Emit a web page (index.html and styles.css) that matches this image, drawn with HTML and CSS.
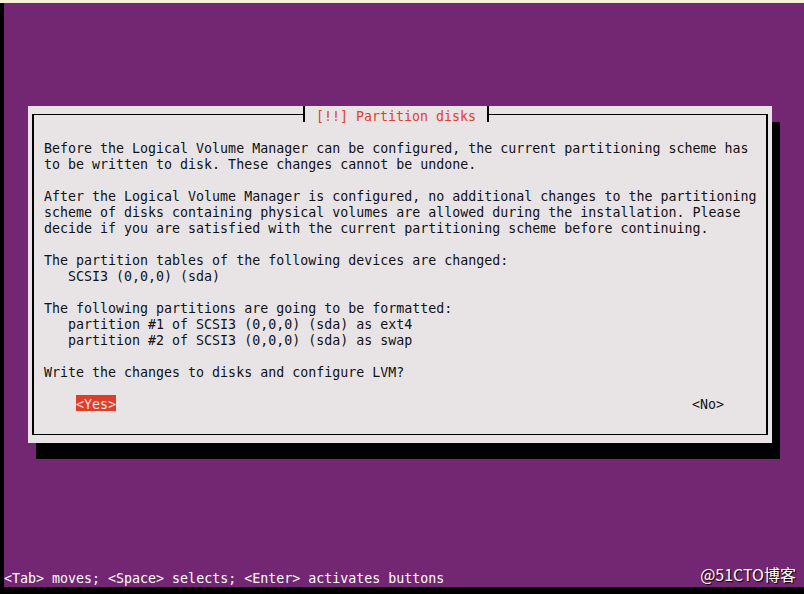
FILE: index.html
```html
<!DOCTYPE html>
<html lang="en">
<head>
  <meta charset="UTF-8" />
  <title>Partition disks</title>
  <link rel="stylesheet" href="styles.css">
</head>
<body>

  <div class="topline"></div>

  <div class="screen">
    <div class="dialog">
      <div class="title">[!!] Partition disks</div>
      <div class="frame">
<pre class="message">Before the Logical Volume Manager can be configured, the current partitioning scheme has
to be written to disk. These changes cannot be undone.

After the Logical Volume Manager is configured, no additional changes to the partitioning
scheme of disks containing physical volumes are allowed during the installation. Please
decide if you are satisfied with the current partitioning scheme before continuing.

The partition tables of the following devices are changed:
   SCSI3 (0,0,0) (sda)

The following partitions are going to be formatted:
   partition #1 of SCSI3 (0,0,0) (sda) as ext4
   partition #2 of SCSI3 (0,0,0) (sda) as swap

Write the changes to disks and configure LVM?</pre>
        <div class="buttons">
          <span class="btn selected">&lt;Yes&gt;</span>
          <span class="btn">&lt;No&gt;</span>
        </div>
      </div>
    </div>

    <div class="status">&lt;Tab&gt; moves; &lt;Space&gt; selects; &lt;Enter&gt; activates buttons</div>

    <div class="watermark">@51CTO博客</div>
  </div>

</body>
</html>
```

FILE: styles.css
```css
body {
  margin: 0;
  width: 804px;
  height: 594px;
  overflow: hidden;
  background: #000;
  font-family: "DejaVu Sans Mono", "Liberation Mono", monospace;
  font-size: 13.3px;
  line-height: 16px;
}

.topline {
  height: 3px;
  background: #f5f2d4;
}

.screen {
  position: relative;
  margin-left: 4px;
  height: 584px;
  background: #732672;
  display: flex;
  flex-direction: column;
}

/* dialog window with its console shadow */
.dialog {
  position: relative;
  margin: 103px 0 0 24px;
  width: 744px;
  height: 337px;
  padding: 8px 4px;
  box-sizing: border-box;
  background: #e8e4e6;
  box-shadow: 8px 16px 0 #000;
  color: #111;
}

.frame {
  height: 100%;
  box-sizing: border-box;
  border-top: 1px solid #000;
  border-bottom: 1px solid #000;
  border-left: 2px solid #000;
  border-right: 2px solid #000;
  padding: 26px 0 0 10px;
}

.title {
  position: absolute;
  top: 0;
  left: 275px;
  height: 13px;
  padding: 3px 11px 0 11px;
  background: #e8e4e6;
  border-left: 2px solid #000;
  border-right: 2px solid #000;
  color: #e0402b;
}

.message {
  margin: 0;
  font: inherit;
  white-space: pre;
}

.buttons {
  display: flex;
  justify-content: space-between;
  margin-top: 14px;
  padding: 0 42px 0 32px;
}

.btn {
  display: inline-block;
  height: 16px;
  box-sizing: border-box;
  padding-top: 2px;
}

.btn.selected {
  background: #de3e29;
  color: #f6e6e4;
}

.status {
  margin-top: auto;
  height: 16px;
  padding-top: 1px;
  color: #fff;
}

.watermark {
  position: absolute;
  right: 8px;
  bottom: 4px;
  font-family: "Noto Sans CJK SC", "Noto Sans", sans-serif;
  font-size: 16px;
  line-height: 18px;
  color: #fff;
  text-shadow: 1px 1px 1px #000;
}
```
